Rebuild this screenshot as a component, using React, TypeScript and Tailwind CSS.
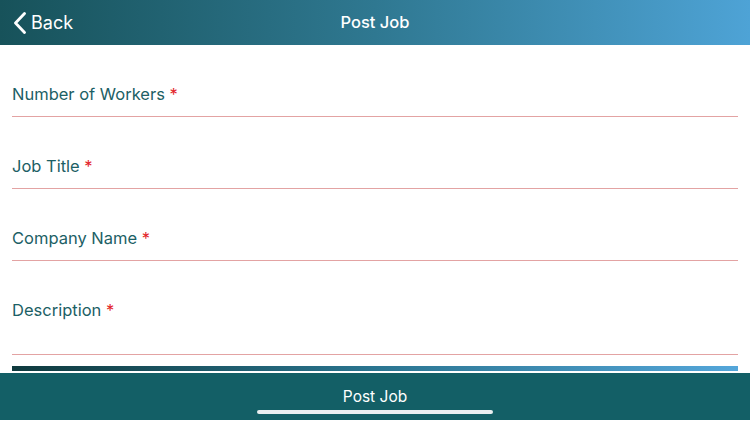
// Post Job form — simple stacked fields with an underline each.
const fields = [
  { label: "Number of Workers", tall: false },
  { label: "Job Title", tall: false },
  { label: "Company Name", tall: false },
  { label: "Description", tall: true },
];

export default function App() {
  return (
    <div
      className="w-[750px] h-[422px] bg-white flex flex-col overflow-hidden"
      style={{ fontFamily: "Inter, 'Noto Sans', sans-serif" }}
    >
      <header className="h-[45px] shrink-0 relative flex items-center bg-gradient-to-r from-[#17525a] via-[#2f7891] to-[#4ea3d6]">
        <button className="flex items-center pl-[13px] text-white text-[18px]">
          <svg width="14" height="22" viewBox="0 0 14 22" fill="none">
            <path
              d="M11.5 1.5 L2.5 11 L11.5 20.5"
              stroke="white"
              strokeWidth="2.8"
              strokeLinecap="round"
              strokeLinejoin="round"
            />
          </svg>
          <span className="ml-[4px]">Back</span>
        </button>
        <h1 className="absolute left-0 right-0 text-center text-white text-[16.5px] font-medium pointer-events-none">
          Post Job
        </h1>
      </header>

      <main className="flex-1 px-3 flex flex-col">
        {fields.map((f) => (
          <div
            key={f.label}
            className={
              "flex flex-col border-b border-[#e3a3a3] " +
              (f.tall ? "h-[94px]" : "h-[72px]")
            }
          >
            <label className="mt-[39px] text-[16.5px] leading-[20px] text-[#1c6065]">
              {f.label} <span className="text-[#e3262b]">*</span>
            </label>
          </div>
        ))}
        <div className="mt-[11px] h-[5px] bg-gradient-to-r from-[#0f3a3e] via-[#2a7590] to-[#54a6da]" />
      </main>

      <footer className="h-[47px] shrink-0 bg-[#135f66] relative flex items-center justify-center mb-[2px]">
        <span className="text-white text-[15.5px]">Post Job</span>
        <div className="absolute bottom-[6px] left-[257px] w-[236px] h-[4px] rounded-full bg-[#e9eef0]" />
      </footer>
    </div>
  );
}
